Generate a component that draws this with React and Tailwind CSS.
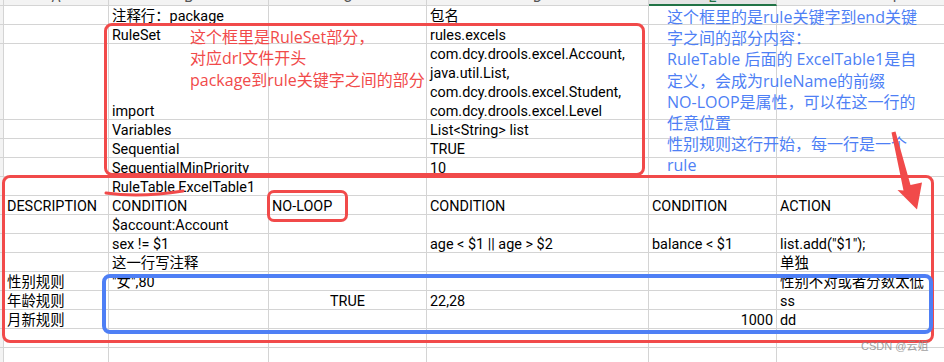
import React from 'react';

const ROWS = [
  { h: 'h-[19px]', c: [null, '注释行：package', null, '包名', null, null] },
  { h: 'h-[19px]', c: [null, 'RuleSet', null, 'rules.excels', null, null] },
  {
    h: 'h-[76px]',
    c: [
      null,
      'import',
      null,
      ['com.dcy.drools.excel.Account,', 'java.util.List,', 'com.dcy.drools.excel.Student,', 'com.dcy.drools.excel.Level'],
      null,
      null,
    ],
  },
  { h: 'h-[19px]', c: [null, 'Variables', null, 'List<String> list', null, null] },
  { h: 'h-[19px]', c: [null, 'Sequential', null, 'TRUE', null, null] },
  { h: 'h-[19px]', c: [null, 'SequentialMinPriority', null, '10', null, null] },
  { h: 'h-[19px]', c: [null, 'RuleTable ExcelTable1', null, null, null, null] },
  { h: 'h-[19px]', c: ['DESCRIPTION', 'CONDITION', 'NO-LOOP', 'CONDITION', 'CONDITION', 'ACTION'] },
  { h: 'h-[19px]', c: [null, '$account:Account', null, null, null, null] },
  { h: 'h-[19px]', c: [null, 'sex != $1', null, 'age < $1 || age > $2', 'balance < $1', 'list.add("$1");'] },
  { h: 'h-[19px]', c: [null, '这一行写注释', null, null, null, '单独'] },
  { h: 'h-[19px]', c: ['性别规则', '"女",80', null, null, null, '性别不对或者分数太低'] },
  { h: 'h-[19px]', c: ['年龄规则', null, { t: 'TRUE', a: 'c' }, '22,28', null, 'ss'] },
  { h: 'h-[19px]', c: ['月新规则', null, null, null, { t: '1000', a: 'r' }, 'dd'] },
  { h: 'h-[19px]', c: [null, null, null, null, null, null] },
  { h: 'h-[19px]', c: [null, null, null, null, null, null] },
];

const GRID = 'grid grid-cols-[4px_105px_160px_158px_222px_128px_240px]';

function Cell({ v }) {
  let content = null;
  let justify = 'justify-start';
  if (Array.isArray(v)) {
    content = (
      <div className="flex flex-col gap-[4px]">
        {v.map((l, i) => (
          <span key={i} className="leading-[15px]">
            {l}
          </span>
        ))}
      </div>
    );
  } else if (v && typeof v === 'object') {
    content = <span className="leading-[15px]">{v.t}</span>;
    justify = v.a === 'c' ? 'justify-center' : 'justify-end';
  } else if (v) {
    content = <span className="leading-[15px]">{v}</span>;
  }
  return (
    <div className={`flex items-end ${justify} border-r border-b border-[#d4d4d4] px-[3px] whitespace-nowrap`}>
      {content}
    </div>
  );
}

export default function App() {
  return (
    <div className="relative w-[944px] h-[362px] overflow-hidden bg-white text-black font-['Roboto','Noto_Sans_CJK_SC',sans-serif] text-[14.4px]">
      <div className="flex flex-col w-[1037px]">
        {/* column header */}
        <div className={`${GRID} h-[6px] text-[14px] text-[#555] leading-[14px]`}>
          <div className="border-r border-b border-[#d4d4d4] bg-[#f3f3f3]" />
          <div className="border-r border-b border-[#d4d4d4] bg-[#f3f3f3] overflow-hidden text-center"><div className="-mt-[10px]">A</div></div>
          <div className="border-r border-b border-[#d4d4d4] bg-[#f3f3f3] overflow-hidden text-center"><div className="-mt-[10px]">B</div></div>
          <div className="border-r border-b border-[#d4d4d4] bg-[#f3f3f3] overflow-hidden text-center"><div className="-mt-[10px]">C</div></div>
          <div className="border-r border-b border-[#d4d4d4] bg-[#f3f3f3] overflow-hidden text-center"><div className="-mt-[10px]">D</div></div>
          <div className="border-r border-b-2 border-r-[#d4d4d4] border-b-[#217346] bg-[#e4e4e4] overflow-hidden text-center text-[#217346]"><div className="-mt-[10px]">E</div></div>
          <div className="border-r border-b border-[#d4d4d4] bg-[#f3f3f3] overflow-hidden text-center"><div className="-mt-[10px]">F</div></div>
        </div>
        {ROWS.map((r, i) => (
          <div key={i} className={`${GRID} ${r.h}`}>
            <div className="border-r border-b border-[#d4d4d4] bg-[#f3f3f3]" />
            {r.c.map((v, j) => (
              <Cell key={j} v={v} />
            ))}
          </div>
        ))}
      </div>

      {/* annotation boxes */}
      <div className="absolute left-[104px] top-[23px] w-[541px] h-[153px] border-[3.5px] border-[#f14a4a] rounded-[8px]" />
      <div className="absolute left-[2px] top-[175px] w-[932px] h-[168px] border-[3.5px] border-[#f14a4a] rounded-[8px]" />
      <div className="absolute left-[267px] top-[190px] w-[81px] h-[32px] border-[3.5px] border-[#f14a4a] rounded-[7px]" />
      <div className="absolute left-[102px] top-[274px] w-[831px] h-[60px] border-[4px] border-[#4e7ff5] rounded-[8px]" />

      {/* red annotation text */}
      <div className="absolute left-[190px] top-[27px] text-[16px] leading-[21.3px] text-[#f14a4a] whitespace-nowrap font-['Open_Sans','Noto_Sans_CJK_SC',sans-serif]">
        <div>这个框里是RuleSet部分，</div>
        <div>对应drl文件开头</div>
        <div>package到rule关键字之间的部分</div>
      </div>

      {/* blue annotation text */}
      <div className="absolute left-[667px] top-[7px] text-[16px] leading-[21.2px] text-[#4e7ff5] whitespace-nowrap font-['Open_Sans','Noto_Sans_CJK_SC',sans-serif]">
        <div>这个框里的是rule关键字到end关键</div>
        <div>字之间的部分内容：</div>
        <div>RuleTable 后面的 ExcelTable1是自</div>
        <div>定义，会成为ruleName的前缀</div>
        <div>NO-LOOP是属性，可以在这一行的</div>
        <div>任意位置</div>
        <div>性别规则这行开始，每一行是一个</div>
        <div>rule</div>
      </div>

      {/* arrow and underline */}
      <svg className="absolute left-0 top-0 pointer-events-none" width="944" height="362" viewBox="0 0 944 362">
        <path d="M106 193 Q 140 198 183 191" fill="none" stroke="#f14a4a" strokeWidth="3" strokeLinecap="round" />
        <polygon
          points="891.5,132.5 895.5,131.5 910.5,185 922,182.5 917,209.5 897.5,190 903.5,190.5"
          fill="#f14a4a"
        />
      </svg>

      {/* watermark */}
      <div className="absolute left-[861px] top-[339px] text-[11px] leading-[14px] text-[#8a8a8a] opacity-80 font-['Liberation_Sans','Noto_Sans_CJK_SC',sans-serif]">
        CSDN @云姐
      </div>
    </div>
  );
}
